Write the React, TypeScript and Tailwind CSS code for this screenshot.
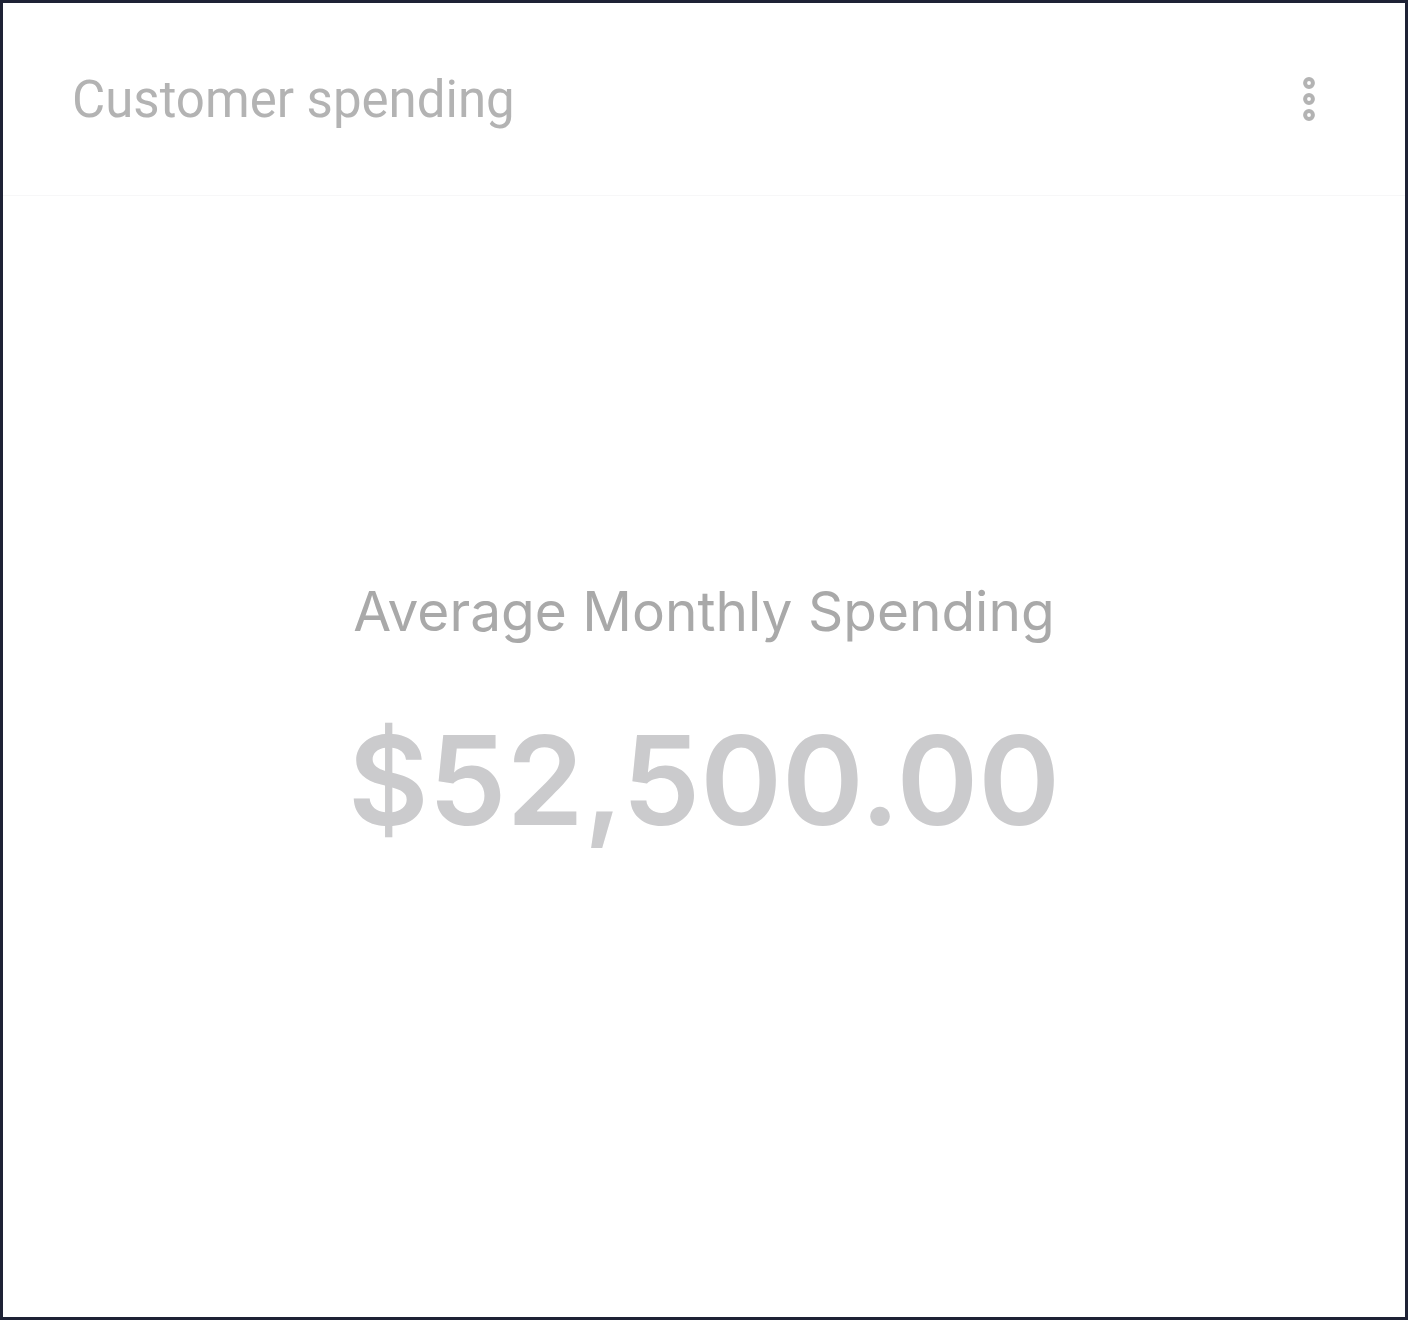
export default function App() {
  return (
    <div className="w-[1408px] h-[1320px] bg-[#1e2235] p-[3px]">
      <div className="flex h-full flex-col bg-white">
        <header className="flex h-[193px] shrink-0 items-center justify-between border-b border-[#f7f7f8] pl-[69px] pr-[86px]">
          <h2 className="text-[51px] leading-none text-[#b3b3b3] [font-family:Roboto,'Liberation_Sans',sans-serif]">
            Customer spending
          </h2>
          <button aria-label="More options" className="flex items-center justify-center">
            <svg width="20" height="50" viewBox="0 0 20 50" fill="none" stroke="#b3b3b3" strokeWidth="4">
              <circle cx="10" cy="9" r="3.9" />
              <circle cx="10" cy="25" r="3.9" />
              <circle cx="10" cy="41" r="3.9" />
            </svg>
          </button>
        </header>
        <main className="flex flex-1 flex-col items-center justify-center pb-[87px] [font-family:Inter,'Noto_Sans',sans-serif]">
          <p className="text-[55px] leading-none text-[#a9a9a9]">Average Monthly Spending</p>
          <p className="mt-[79px] text-[124px] font-semibold leading-none text-[#cbcbcd]">$52,500.00</p>
        </main>
      </div>
    </div>
  );
}
